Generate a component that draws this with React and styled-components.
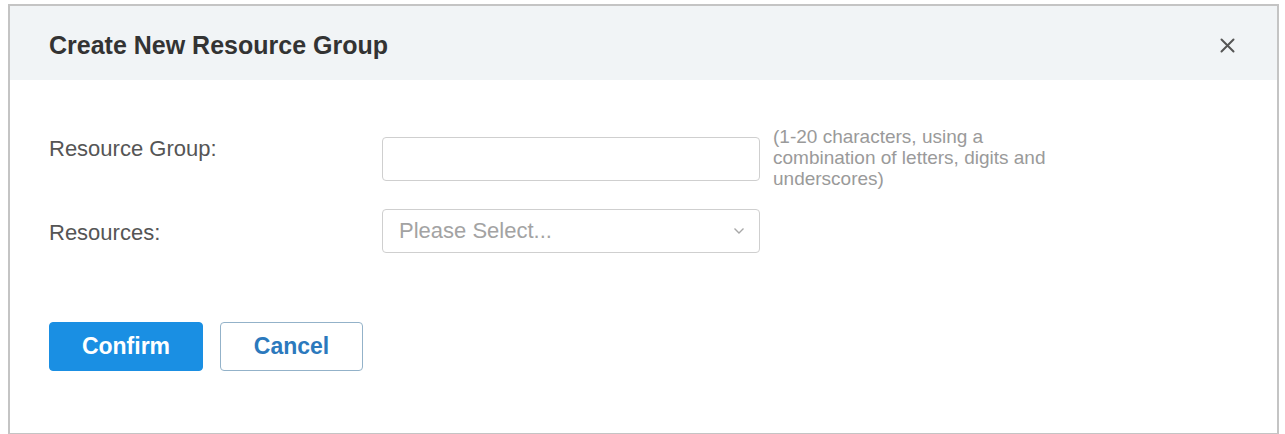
import React from "react";
import styled, { createGlobalStyle } from "styled-components";

const Global = createGlobalStyle`
  html, body { margin: 0; padding: 0; background: #ffffff; }
  body { font-family: "Liberation Sans", Arial, sans-serif; }
  * { box-sizing: border-box; }
`;

const Frame = styled.div`
  margin: 4px 6px 0 8px;
  height: 430px;
  border: 2px solid #c4c4c4;
  border-bottom-width: 1px;
  background: #ffffff;
  display: flex;
  flex-direction: column;
`;

const Header = styled.div`
  height: 74px;
  background: #f1f4f6;
  display: flex;
  align-items: center;
  justify-content: space-between;
  padding: 4px 40px 0 39px;
`;

const Title = styled.h2`
  margin: 0;
  font-size: 25px;
  font-weight: 700;
  color: #333333;
`;

const Close = styled.button`
  border: 0;
  background: transparent;
  padding: 0;
  width: 20px;
  height: 20px;
  display: flex;
  align-items: center;
  justify-content: center;
  cursor: pointer;
`;

const Body = styled.div`
  padding: 46px 39px 0 39px;
  display: flex;
  flex-direction: column;
`;

const Row = styled.div`
  display: flex;
  align-items: ${(p) => (p.$top ? "flex-start" : "center")};
  margin-top: ${(p) => p.$mt || 0}px;
`;

const Label = styled.label`
  width: 333px;
  flex: none;
  font-size: 22px;
  line-height: 24px;
  color: #555555;
  padding-top: ${(p) => p.$pt || 0}px;
`;

const TextInput = styled.input`
  width: 378px;
  height: 44px;
  flex: none;
  margin-top: ${(p) => p.$mt || 0}px;
  border: 1px solid #cfcfcf;
  border-radius: 4px;
  font-family: inherit;
  font-size: 22px;
  padding: 0 16px;
  outline: none;
`;

const Select = styled.div`
  width: 378px;
  height: 44px;
  flex: none;
  border: 1px solid #cfcfcf;
  border-radius: 4px;
  display: flex;
  align-items: center;
  justify-content: space-between;
  padding: 0 14px 0 16px;
`;

const Placeholder = styled.span`
  font-size: 22px;
  color: #a3a3a3;
`;

const Hint = styled.div`
  margin-left: 13px;
  width: 300px;
  font-size: 19px;
  line-height: 21px;
  color: #9a9a9a;
`;

const Actions = styled.div`
  display: flex;
  gap: 17px;
  margin-top: 69px;
`;

const Button = styled.button`
  height: 49px;
  width: ${(p) => p.$w}px;
  border-radius: 4px;
  font-family: inherit;
  font-size: 23px;
  font-weight: 700;
  cursor: pointer;
  border: 1px solid ${(p) => (p.$primary ? "#1a8fe3" : "#93b2c9")};
  background: ${(p) => (p.$primary ? "#1a8fe3" : "#ffffff")};
  color: ${(p) => (p.$primary ? "#ffffff" : "#2b79bd")};
`;

export default function App() {
  return (
    <>
      <Global />
      <Frame>
        <Header>
          <Title>Create New Resource Group</Title>
          <Close aria-label="close">
            <svg width="15" height="15" viewBox="0 0 15 15">
              <path d="M1.5 1.5 L13.5 13.5 M13.5 1.5 L1.5 13.5" stroke="#555" strokeWidth="2" strokeLinecap="round" />
            </svg>
          </Close>
        </Header>
        <Body>
          <Row $top>
            <Label $pt={11}>Resource Group:</Label>
            <TextInput $mt={11} />
            <Hint>(1-20 characters, using a combination of letters, digits and underscores)</Hint>
          </Row>
          <Row $mt={20}>
            <Label $pt={4}>Resources:</Label>
            <Select>
              <Placeholder>Please Select...</Placeholder>
              <svg width="12" height="8" viewBox="0 0 12 8">
                <path d="M1.5 1.5 L6 6 L10.5 1.5" fill="none" stroke="#a8a8a8" strokeWidth="1.4" />
              </svg>
            </Select>
          </Row>
          <Actions>
            <Button $primary $w={154}>Confirm</Button>
            <Button $w={143}>Cancel</Button>
          </Actions>
        </Body>
      </Frame>
    </>
  );
}
